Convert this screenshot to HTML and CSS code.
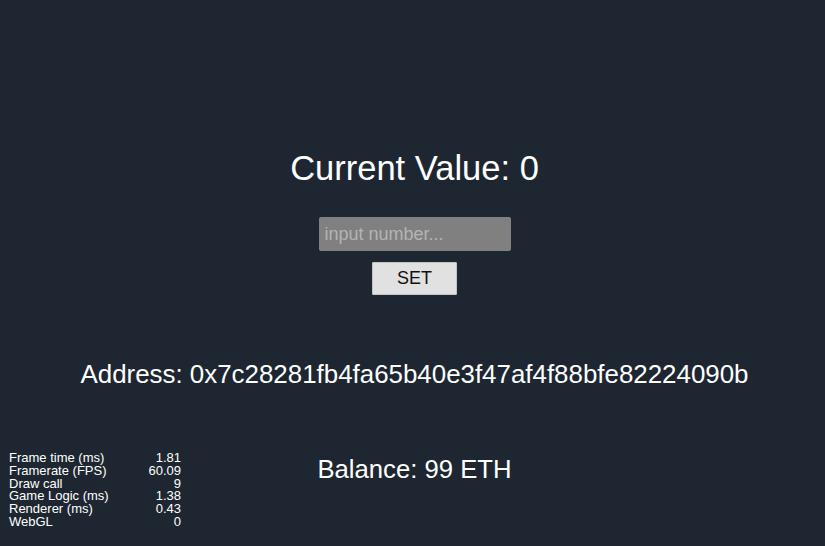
FILE: index.html
```html
<!DOCTYPE html>
<html>
<head>
<meta charset="utf-8">
<link rel="stylesheet" href="styles.css">
</head>
<body>
<main class="app">
  <h1 class="current">Current Value: 0</h1>
  <input class="num-input" type="text" placeholder="input number...">
  <button class="set-btn">SET</button>
  <div class="address">Address: 0x7c28281fb4fa65b40e3f47af4f88bfe82224090b</div>
  <div class="balance">Balance: 99 ETH</div>
</main>
<div class="stats">
  <div class="row"><span>Frame time (ms)</span><span>1.81</span></div>
  <div class="row"><span>Framerate (FPS)</span><span>60.09</span></div>
  <div class="row"><span>Draw call</span><span>9</span></div>
  <div class="row"><span>Game Logic (ms)</span><span>1.38</span></div>
  <div class="row"><span>Renderer (ms)</span><span>0.43</span></div>
  <div class="row"><span>WebGL</span><span>0</span></div>
</div>
</body>
</html>
```
FILE: styles.css
```css
html, body {
  margin: 0;
  padding: 0;
  background: #1e2731;
  width: 825px;
  height: 546px;
  overflow: hidden;
  font-family: "Liberation Sans", Arial, sans-serif;
  color: #ffffff;
}
.app {
  display: flex;
  flex-direction: column;
  align-items: center;
  padding-top: 148px;
  padding-left: 4px;
}
.current {
  margin: 0;
  font-size: 34.5px;
  line-height: 40px;
  font-weight: normal;
}
.num-input {
  margin-top: 29px;
  width: 192px;
  height: 34px;
  box-sizing: border-box;
  border: none;
  border-radius: 2px;
  background: #808080;
  padding: 0 6px;
  font-family: "Liberation Sans", Arial, sans-serif;
  font-size: 18px;
  color: #fff;
  outline: none;
}
.num-input::placeholder {
  color: #b4b4b4;
}
.set-btn {
  margin-top: 11px;
  width: 85px;
  height: 33px;
  box-sizing: border-box;
  border: 1px solid #c4c4c4;
  border-radius: 1px;
  background: #e1e1e1;
  font-family: "Liberation Sans", Arial, sans-serif;
  font-size: 18px;
  color: #111;
  padding: 0;
}
.address {
  margin-top: 64px;
  font-size: 25.9px;
  line-height: 30px;
}
.balance {
  margin-top: 65px;
  font-size: 25.7px;
  line-height: 30px;
}
.stats {
  position: absolute;
  left: 9px;
  top: 452px;
  width: 172px;
  font-size: 13px;
  line-height: 12.8px;
}
.row {
  display: flex;
  justify-content: space-between;
}
```
